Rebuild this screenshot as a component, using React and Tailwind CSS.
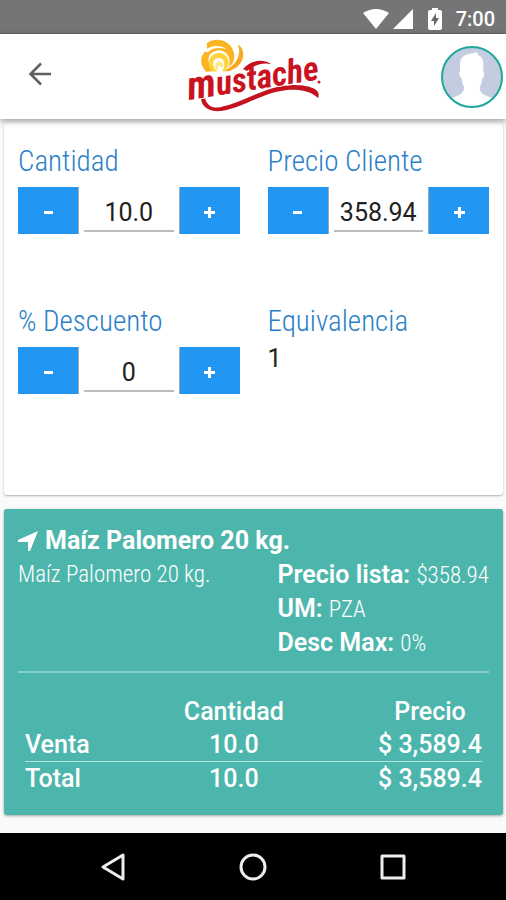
import { useState } from "react";

const condensed = "font-['Roboto_Condensed','Roboto',sans-serif] font-light";

function StatusBar() {
  return (
    <div className="flex h-[34px] items-center justify-end border-b border-[#666] bg-[#757575] pt-1 pr-[11px] text-white">
      <svg width="26" height="20" viewBox="0 0 26 20" fill="currentColor" aria-hidden="true">
        <path d="M0 4 Q13 -4 26 4 L13 20 Z" />
      </svg>
      <svg className="ml-1" width="21" height="20" viewBox="0 0 21 20" fill="currentColor" aria-hidden="true">
        <path d="M20 0 V20 H0 Z" />
      </svg>
      <svg className="mx-3" width="18" height="22" viewBox="0 0 18 22" aria-hidden="true">
        <path fill="#fff" d="M6 0 H12 V2 H14 Q16 2 16 4 V20 Q16 22 14 22 H4 Q2 22 2 20 V4 Q2 2 4 2 H6 Z" />
        <path fill="#666" d="M10 5 L5 13 H8 V18 L13 10 H10 Z" />
      </svg>
      <span className="text-[20px] leading-6 font-medium">7:00</span>
    </div>
  );
}

function Logo() {
  return (
    <svg className="overflow-visible" width="136" height="76" viewBox="0 0 136 76" role="img" aria-label="Mustache">
      <g transform="translate(-15 -8.500) scale(0.3333)">
        <path fill="#fbb520" d="M108 124 C88 100 92 72 112 60 L110 38 C140 16 188 30 193 74 C194 92 186 104 176 110 C184 88 176 64 152 60 C126 58 112 74 116 94 C118 106 122 114 128 122 Z" />
        <path fill="#fbb520" d="M94 86 C98 66 108 58 124 54 L116 74 C108 88 106 104 112 122 C100 114 92 102 94 86 Z" />
        <path fill="#fff" d="M104 62 C120 44 150 42 170 56 C148 50 126 52 112 66 Z" />
        <path fill="#f8a81e" d="M203 42 C224 52 228 88 200 110 C186 120 172 124 158 122 C184 112 200 96 206 74 C209 62 208 52 203 42 Z" />
        <path fill="#fdd23c" d="M126 122 C110 100 116 74 140 68 C162 64 178 80 176 98 C174 112 166 120 156 122 C166 108 166 92 154 84 C140 78 128 88 130 102 C131 112 136 118 142 124 Z" />
        <path fill="#fde887" d="M142 122 C132 112 134 94 148 92 C160 92 164 104 156 114 C154 106 148 104 145 110 Z" />
      </g>
      <path fill="#c4121e" d="M20 59 C22 67 28 70 36 68 C62 62 80 47 108 46 C124 46 137 50 133 59 C126 52 114 50 102 51 C76 54 58 69 36 72 C24 73 17 68 16 60 Z" />
      <g transform="rotate(-9 4 61)">
        <text x="4" y="61" fontFamily="'Roboto Condensed', Roboto, sans-serif" fontSize="34" fontWeight="700" fontStyle="italic" fill="#c9131f" stroke="#fff" strokeWidth="2" paintOrder="stroke">
          <tspan fontSize="40">m</tspan>ustache
        </text>
      </g>
      <path fill="#c4121e" d="M58 30 C65 22 77 19 86 25 C76 23 68 27 62 32 Z" />
      <circle cx="134" cy="43" r="1.500" fill="#c9131f" />
    </svg>
  );
}

function Header() {
  return (
    <header className="relative grid h-[85px] grid-cols-[1fr_auto_1fr] items-center bg-white px-[3px] shadow-[0_2px_6px_rgba(0,0,0,0.4)]">
      <button type="button" aria-label="Volver" className="mt-6 ml-5 flex h-8 w-8 items-center justify-center self-start text-[#606060]">
        <svg width="24" height="24" viewBox="0 0 24 24" fill="none" stroke="currentColor" strokeWidth="2.500" aria-hidden="true">
          <path d="M24 12 H4 M14 1.500 L3.500 12 L14 22.500" />
        </svg>
      </button>
      <Logo />
      <button type="button" aria-label="Perfil" className="justify-self-end">
        <svg width="62" height="62" viewBox="0 0 62 62" aria-hidden="true">
          <defs>
            <clipPath id="avatar">
              <circle cx="31" cy="31" r="29.500" />
            </clipPath>
          </defs>
          <circle cx="31" cy="31" r="30" fill="#c3cce1" />
          <path clipPath="url(#avatar)" fill="#fff" d="M36 6 C31 8 19 7 19 18 C19 21 19 23 19 25 C17 26 19 32 21 33 C21 37 22 38 23 41 C23 50 15 49 10 53 V62 H52 V53 C47 49 38 50 39 41 C40 38 41 37 41 33 C43 32 44 26 42 25 C43 19 43 11 37 9 Z" />
          <circle cx="31" cy="31" r="30" fill="none" stroke="#1fa898" strokeWidth="2" />
        </svg>
      </button>
    </header>
  );
}

function Stepper({ id, label, initial, step, digits }) {
  const [value, setValue] = useState(initial);
  const change = (delta) => setValue((Number(value) + delta).toFixed(digits));
  const button = "flex h-[47px] w-[61px] shrink-0 items-center justify-center border-[#a0a8b0] bg-[#2196f3] pt-1 text-white";
  return (
    <div className="h-40">
      <label htmlFor={id} className={`${condensed} block text-[29px] leading-9 whitespace-nowrap text-[#2a80c8]`}>
        {label}
      </label>
      <div className="mt-2 flex gap-[5px]">
        <button type="button" aria-label={`Restar ${label}`} onClick={() => change(-step)} className={`${button} border-r`}>
          <span className="h-[3px] w-[9px] bg-white" />
        </button>
        <input
          id={id}
          value={value}
          inputMode="decimal"
          onChange={(event) => setValue(event.target.value)}
          className="h-[45px] min-w-0 flex-1 border-b-2 border-[#bdbdbd] pt-2 text-center text-[25px] text-[#212121] outline-none"
        />
        <button type="button" aria-label={`Sumar ${label}`} onClick={() => change(step)} className={`${button} border-l`}>
          <svg width="11" height="11" viewBox="0 0 11 11" stroke="currentColor" strokeWidth="3" aria-hidden="true">
            <path d="M5.500 0 V11 M0 5.500 H11" />
          </svg>
        </button>
      </div>
    </div>
  );
}

function Detail({ name, value }) {
  return (
    <p className="whitespace-nowrap">
      <span className="font-semibold">{name}:</span> <span className={`${condensed} text-[23px] leading-none`}>{value}</span>
    </p>
  );
}

function Summary() {
  return (
    <section className="mt-[14px] rounded-[3px] bg-[#4db6ac] px-[14px] pt-[15px] pb-5 text-[25px] leading-[34px] text-white shadow-[0_1px_3px_rgba(0,0,0,0.35)]">
      <h2 className="flex items-center font-bold">
        <svg className="mr-[7px]" width="20" height="20" viewBox="0 0 20 20" fill="currentColor" aria-hidden="true">
          <path d="M20 0 L0 9 V11 H10 V20 H12 Z" />
        </svg>
        Maíz Palomero 20 kg.
      </h2>
      <div className="flex justify-between">
        <p className={`${condensed} text-[23px] whitespace-nowrap`}>Maíz Palomero 20 kg.</p>
        <div>
          <Detail name="Precio lista" value="$358.94" />
          <Detail name="UM" value="PZA" />
          <Detail name="Desc Max" value="0%" />
        </div>
      </div>
      <div className="mt-[11px] border-t-2 border-white/35 px-[7px] pt-[22px]">
        <table className="w-full border-collapse leading-[33px] font-medium whitespace-nowrap">
          <thead>
            <tr>
              <td />
              <th scope="col" className="w-full text-center font-medium">Cantidad</th>
              <th scope="col" className="text-center font-medium">Precio</th>
            </tr>
          </thead>
          <tbody>
            <tr>
              <th scope="row" className="text-left font-medium">Venta</th>
              <td className="text-center">10.0</td>
              <td className="text-right">$ 3,589.4</td>
            </tr>
            <tr className="border-t border-white/60">
              <th scope="row" className="text-left font-medium">Total</th>
              <td className="text-center">10.0</td>
              <td className="text-right">$ 3,589.4</td>
            </tr>
          </tbody>
        </table>
      </div>
    </section>
  );
}

function NavBar() {
  const button = "flex h-10 w-10 items-center justify-center";
  return (
    <nav className="flex h-[67px] items-center justify-center gap-[100px] bg-black text-[#eee]">
      <button type="button" aria-label="Atrás" className={button}>
        <svg width="28" height="28" viewBox="0 0 28 28" fill="none" stroke="currentColor" strokeWidth="3" strokeLinejoin="round" aria-hidden="true">
          <path d="M24 2 V26 L4 14 Z" />
        </svg>
      </button>
      <button type="button" aria-label="Inicio" className={button}>
        <svg width="28" height="28" viewBox="0 0 28 28" fill="none" stroke="currentColor" strokeWidth="3" aria-hidden="true">
          <circle cx="14" cy="14" r="12" />
        </svg>
      </button>
      <button type="button" aria-label="Recientes" className={button}>
        <svg width="28" height="28" viewBox="0 0 28 28" fill="none" stroke="currentColor" strokeWidth="3" strokeLinejoin="round" aria-hidden="true">
          <rect x="3" y="3" width="22" height="22" />
        </svg>
      </button>
    </nav>
  );
}

export default function App() {
  return (
    <div className="flex min-h-screen flex-col bg-[#fafafa] font-['Roboto',sans-serif]">
      <StatusBar />
      <Header />
      <main className="flex-1 pt-1 pr-[3px] pl-1">
        <section className="grid grid-cols-2 gap-x-7 rounded-[3px] bg-white px-[14px] pt-5 pb-8 shadow-[0_1px_2px_rgba(0,0,0,0.3)]">
          <Stepper id="cantidad" label="Cantidad" initial="10.0" step={1} digits={1} />
          <Stepper id="precio" label="Precio Cliente" initial="358.94" step={1} digits={2} />
          <Stepper id="descuento" label="% Descuento" initial="0" step={1} digits={0} />
          <div>
            <h3 className={`${condensed} text-[29px] leading-9 text-[#2a80c8]`}>Equivalencia</h3>
            <p className="text-[25px] leading-10 text-[#212121]">1</p>
          </div>
        </section>
        <Summary />
      </main>
      <NavBar />
    </div>
  );
}
